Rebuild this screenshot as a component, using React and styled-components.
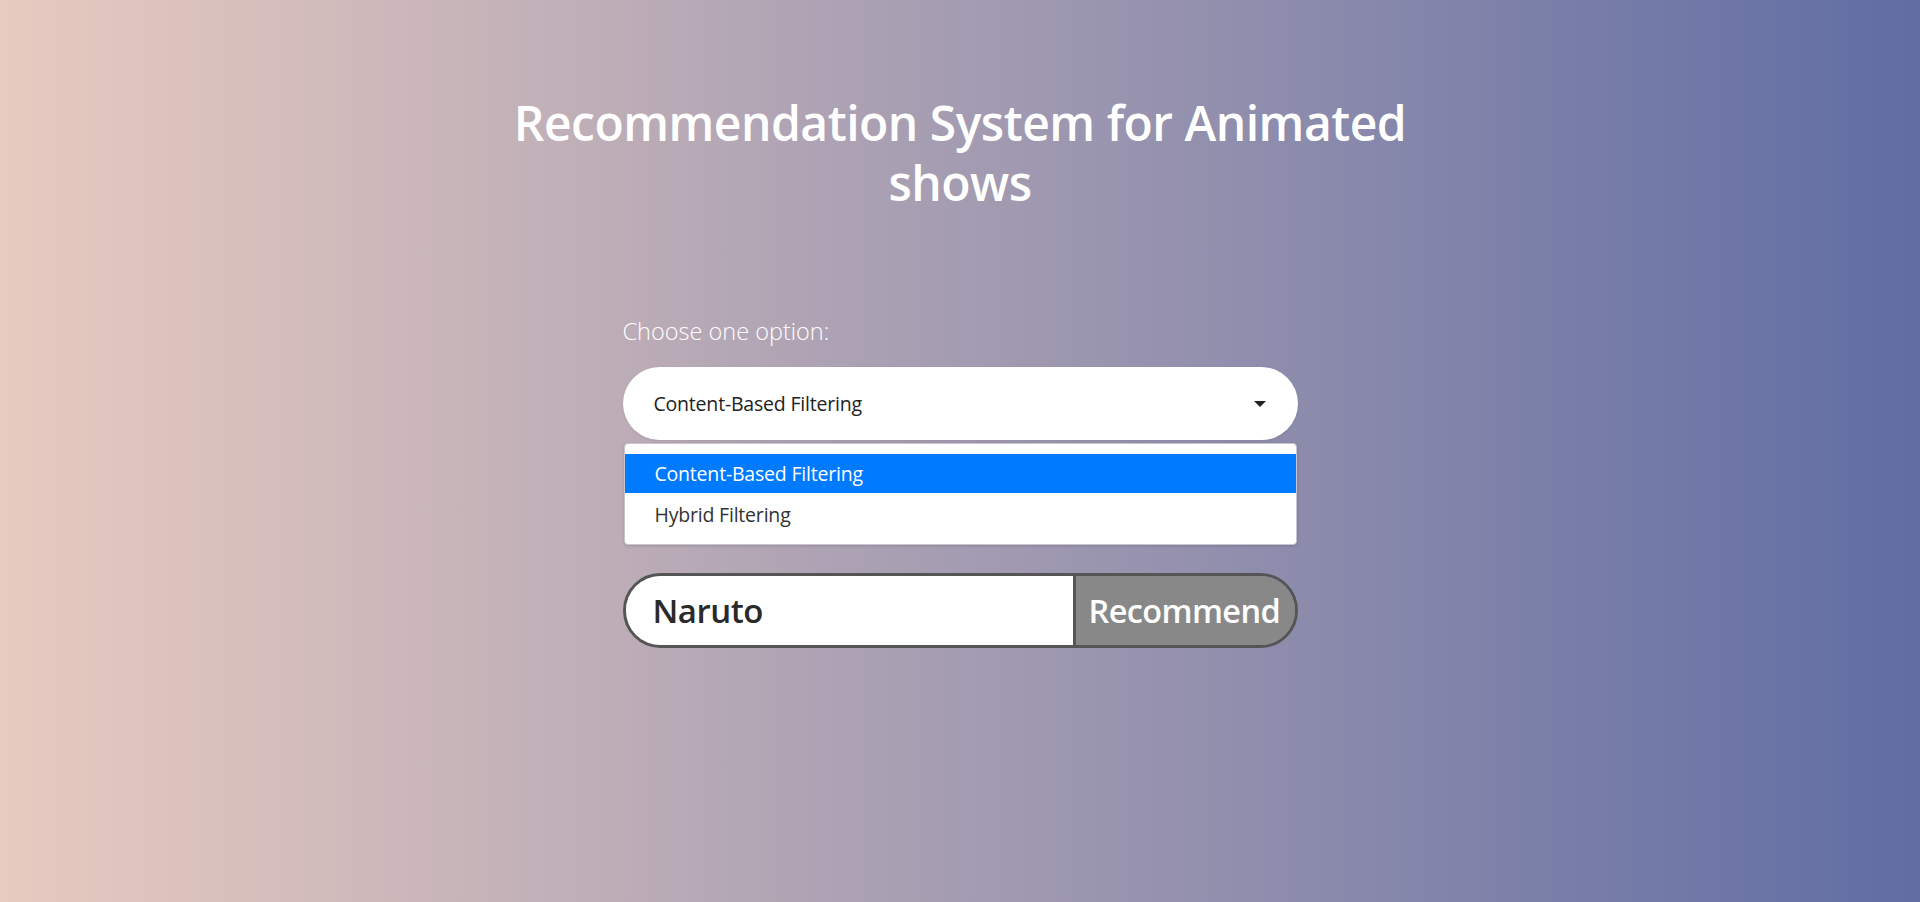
import React from "react";
import styled, { createGlobalStyle } from "styled-components";

const Global = createGlobalStyle`
  html, body { margin: 0; padding: 0; }
  body {
    font-family: "Open Sans", "Noto Sans", sans-serif;
    background: linear-gradient(to right, #e8cbc0 0%, #606da3 100%);
    min-height: 100vh;
  }
  #root { min-height: 100vh; }
`;

const Page = styled.main`
  min-height: 902px;
  display: flex;
  flex-direction: column;
  align-items: center;
  padding-top: 93px;
  box-sizing: border-box;
`;

const Title = styled.h1`
  margin: 0;
  max-width: 960px;
  text-align: center;
  color: #fff;
  font-family: "Open Sans", sans-serif;
  font-weight: 600;
  font-size: 48px;
  line-height: 60px;
  letter-spacing: -0.5px;
`;

const Form = styled.div`
  width: 675px;
  margin-top: 103px;
  display: flex;
  flex-direction: column;
`;

const Label = styled.label`
  color: #fff;
  font-family: "Open Sans", sans-serif;
  font-weight: 300;
  font-size: 23.5px;
  line-height: 30px;
  margin-bottom: 21px;
`;

const SelectBox = styled.div`
  height: 73px;
  background: #fff;
  border-radius: 37px;
  display: flex;
  align-items: center;
  justify-content: space-between;
  padding: 0 32px 0 31px;
  box-sizing: border-box;
  box-shadow: 0 1px 3px rgba(0, 0, 0, 0.08);
`;

const SelectText = styled.span`
  color: #222;
  font-size: 19.5px;
  letter-spacing: -0.2px;
`;

const Caret = styled.span`
  width: 0;
  height: 0;
  border-left: 6px solid transparent;
  border-right: 6px solid transparent;
  border-top: 6px solid #222;
`;

const Menu = styled.ul`
  list-style: none;
  margin: 3px 1px 0;
  padding: 10px 0 9px;
  background: #fff;
  border: 1px solid #c9c5cf;
  border-radius: 4px;
  box-shadow: 0 1px 3px rgba(0, 0, 0, 0.15);
`;

const Option = styled.li`
  height: ${(p) => (p.$active ? "39px" : "42px")};
  display: flex;
  align-items: center;
  padding-left: 30px;
  font-size: 19.5px;
  letter-spacing: -0.2px;
  color: ${(p) => (p.$active ? "#fff" : "#333")};
  background: ${(p) => (p.$active ? "#007aff" : "#fff")};
`;

const SearchGroup = styled.div`
  margin-top: 28px;
  height: 75px;
  display: flex;
  border: 3px solid #555;
  border-radius: 38px;
  overflow: hidden;
  box-sizing: border-box;
`;

const Input = styled.input`
  flex: 1;
  min-width: 0;
  border: none;
  outline: none;
  background: #fff;
  padding: 0 0 0 27px;
  font-family: "Open Sans", sans-serif;
  font-weight: 600;
  font-size: 33px;
  color: #2a2a2a;
  letter-spacing: -0.5px;
`;

const Button = styled.button`
  width: 222px;
  border: none;
  border-left: 3px solid #555;
  background: #888;
  color: #fff;
  font-family: "Open Sans", sans-serif;
  font-weight: 600;
  font-size: 32.5px;
  letter-spacing: -0.6px;
  padding: 0 0 0 13px;
  text-align: left;
  white-space: nowrap;
  cursor: pointer;
`;

export default function App() {
  return (
    <>
      <Global />
      <Page>
        <Title>Recommendation System for Animated shows</Title>
        <Form>
          <Label>Choose one option:</Label>
          <SelectBox>
            <SelectText>Content-Based Filtering</SelectText>
            <Caret />
          </SelectBox>
          <Menu>
            <Option $active>Content-Based Filtering</Option>
            <Option>Hybrid Filtering</Option>
          </Menu>
          <SearchGroup>
            <Input defaultValue="Naruto" />
            <Button>Recommend</Button>
          </SearchGroup>
        </Form>
      </Page>
    </>
  );
}
